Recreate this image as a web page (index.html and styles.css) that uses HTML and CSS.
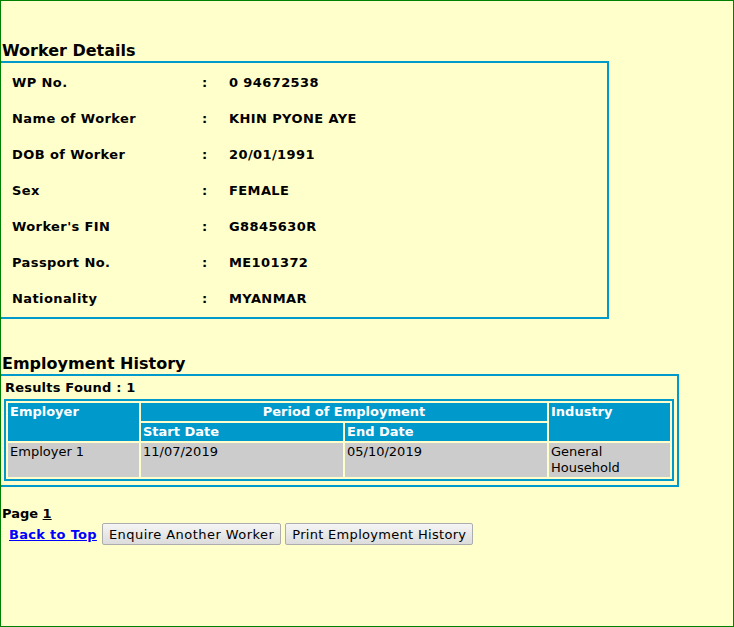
FILE: index.html
```html
<!DOCTYPE html>
<html lang="en">
<head>
    <meta charset="UTF-8">
    <title>Worker Details</title>
    <link rel="stylesheet" href="styles.css">
</head>
<body>
<div class="page">

    <h2 class="section-title worker-title">Worker Details</h2>
    <div class="details-box">
        <div class="detail-row"><span>WP No.</span><span>:</span><span>0 94672538</span></div>
        <div class="detail-row"><span>Name of Worker</span><span>:</span><span>KHIN PYONE AYE</span></div>
        <div class="detail-row"><span>DOB of Worker</span><span>:</span><span>20/01/1991</span></div>
        <div class="detail-row"><span>Sex</span><span>:</span><span>FEMALE</span></div>
        <div class="detail-row"><span>Worker's FIN</span><span>:</span><span>G8845630R</span></div>
        <div class="detail-row"><span>Passport No.</span><span>:</span><span>ME101372</span></div>
        <div class="detail-row"><span>Nationality</span><span>:</span><span>MYANMAR</span></div>
    </div>

    <h2 class="section-title history-title">Employment History</h2>
    <div class="history-box">
        <div class="results">Results Found : 1</div>
        <table class="emp-table">
            <colgroup>
                <col class="col-employer">
                <col class="col-date">
                <col class="col-date">
                <col class="col-industry">
            </colgroup>
            <tr>
                <th rowspan="2">Employer</th>
                <th colspan="2" class="center">Period of Employment</th>
                <th rowspan="2">Industry</th>
            </tr>
            <tr>
                <th>Start Date</th>
                <th>End Date</th>
            </tr>
            <tr>
                <td>Employer 1</td>
                <td>11/07/2019</td>
                <td>05/10/2019</td>
                <td>General<br>Household</td>
            </tr>
        </table>
    </div>

    <div class="pager">Page <u>1</u></div>
    <div class="actions">
        <a href="#" class="top-link">Back to Top</a>
        <button class="btn btn-wide">Enquire Another Worker</button>
        <button class="btn">Print Employment History</button>
    </div>

</div>
</body>
</html>
```

FILE: styles.css
```css
body {
    margin: 0;
    padding: 0;
    background-color: #ffffcc;
    font-family: "DejaVu Sans", Verdana, sans-serif;
    font-size: 13px;
    color: #000;
}
.page {
    box-sizing: border-box;
    width: 734px;
    height: 627px;
    border: 1px solid #008000;
    background-color: #ffffcc;
    overflow: hidden;
}
.section-title {
    font-size: 16px;
    font-weight: bold;
    line-height: 20px;
    margin: 0;
    padding-left: 1px;
}
.worker-title {
    margin-top: 40px;
}
.history-title {
    margin-top: 35px;
}
.details-box {
    width: 606px;
    border: 2px solid #0099cc;
    border-left: none;
    padding: 2px 0 0 0;
}
.detail-row {
    display: grid;
    grid-template-columns: 190px 27px 1fr;
    padding-left: 11px;
    height: 36px;
    line-height: 36px;
    font-weight: bold;
    letter-spacing: 0.4px;
}
.history-box {
    width: 670px;
    border: 2px solid #0099cc;
    border-left: none;
    padding: 0 3px 4px 3px;
}
.results {
    font-weight: bold;
    line-height: 16px;
    letter-spacing: 0.2px;
    padding: 4px 0 3px 1px;
}
.emp-table {
    table-layout: fixed;
    width: 670px;
    border: 2px solid #0099cc;
    border-spacing: 2px;
}
.col-employer { width: 131px; }
.col-date { width: 202px; }
.col-industry { width: 121px; }
.emp-table th,
.emp-table td {
    padding: 1px 2px;
    line-height: 16px;
    text-align: left;
    vertical-align: top;
}
.emp-table th {
    background-color: #0099cc;
    color: #fff;
    font-weight: bold;
}
.emp-table th.center {
    text-align: center;
}
.emp-table td {
    background-color: #cccccc;
}
.pager {
    margin-top: 19px;
    padding-left: 1px;
    line-height: 16px;
    font-weight: bold;
}
.actions {
    display: flex;
    align-items: center;
    margin-top: 1px;
    padding-left: 8px;
}
.top-link {
    color: #0000ff;
    font-weight: bold;
    letter-spacing: 0.3px;
    margin-right: 5px;
}
.btn {
    font-family: "DejaVu Sans", Verdana, sans-serif;
    font-size: 13px;
    letter-spacing: 0.3px;
    color: #000;
    height: 22px;
    padding: 0 6px;
    margin-right: 4px;
    border: 1px solid #adadad;
    border-radius: 2px;
    background: linear-gradient(#f5f5f5, #dcdcdc);
    cursor: pointer;
}
.btn-wide {
    letter-spacing: 0.45px;
}
```
